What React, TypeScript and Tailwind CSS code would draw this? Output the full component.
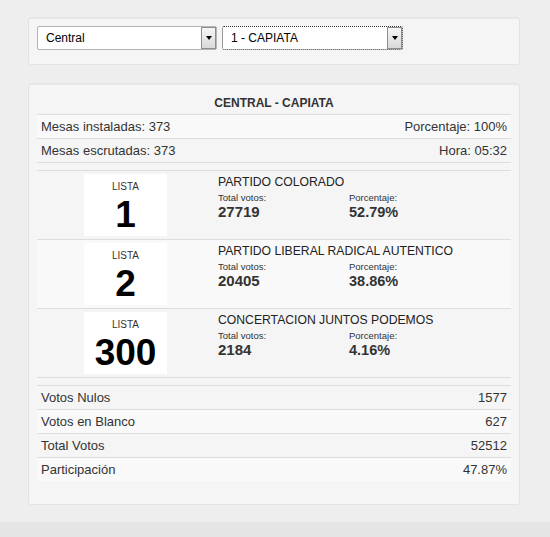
import React from "react";

const listas = [
  { lista: "1", nombre: "PARTIDO COLORADO", votos: "27719", pct: "52.79%" },
  { lista: "2", nombre: "PARTIDO LIBERAL RADICAL AUTENTICO", votos: "20405", pct: "38.86%" },
  { lista: "300", nombre: "CONCERTACION JUNTOS PODEMOS", votos: "2184", pct: "4.16%" },
];

const totales = [
  ["Votos Nulos", "1577"],
  ["Votos en Blanco", "627"],
  ["Total Votos", "52512"],
  ["Participación", "47.87%"],
];

const FakeSelect = ({ value, focused }: { value: string; focused?: boolean }) => {
  return (
    <div
      className={
        focused
          ? "relative flex h-[24px] w-[181px] items-center bg-white border border-dotted border-[#333] rounded-[2px]"
          : "relative flex h-[24px] w-[180px] items-center bg-white border border-[#b4b4b4] rounded-[2px]"
      }
    >
      <span className="pl-[8px] text-[12px] text-black">{value}</span>
      <div className="absolute right-0 top-0 bottom-0 w-[15px] flex items-center justify-center border border-[#8e8e8e] bg-gradient-to-b from-[#f6f6f6] to-[#d9d9d9]">
        <div className="w-0 h-0 border-l-[3.5px] border-r-[3.5px] border-t-[4px] border-l-transparent border-r-transparent border-t-black" />
      </div>
    </div>
  );
};

export default function App() {
  return (
    <div className="h-[537px] overflow-hidden flex flex-col bg-[#eeeeee] font-['Liberation_Sans',Arial,sans-serif] text-[#333]">
      <div className="pt-[17px] pl-[28px] w-[520px]">
        {/* filtros */}
        <div className="h-[48px] border border-[#e3e3e3] bg-[#f5f5f5] rounded-[3px] pt-[8px] pl-[8px] flex gap-[5px] shadow-[inset_0_1px_1px_rgba(0,0,0,0.05)]">
          <FakeSelect value="Central" />
          <FakeSelect value="1 - CAPIATA" focused />
        </div>

        {/* resultados */}
        <div className="mt-[18px] border border-[#e3e3e3] bg-[#f5f5f5] rounded-[3px] px-[8px] pt-[8px] pb-[23px] shadow-[inset_0_1px_1px_rgba(0,0,0,0.05)]">
          <div className="h-[22px] flex items-center justify-center text-[12px] font-bold">
            CENTRAL - CAPIATA
          </div>
          <div className="border-t border-[#dddddd] h-[24px] px-[4px] flex items-center justify-between text-[13px] bg-[#f9f9f9]">
            <span>Mesas instaladas: 373</span>
            <span>Porcentaje: 100%</span>
          </div>
          <div className="border-t border-b border-[#dddddd] h-[25px] px-[4px] flex items-center justify-between text-[13px]">
            <span>Mesas escrutadas: 373</span>
            <span>Hora: 05:32</span>
          </div>

          <div className="mt-[7px] border-t border-[#dddddd]">
            {listas.map((l, i) => (
              <div
                key={l.lista}
                className={
                  i === 1
                    ? "flex py-[3px] border-b border-[#dddddd] bg-[#f9f9f9]"
                    : "flex py-[3px] border-b border-[#dddddd]"
                }
              >
                <div className="w-[181px] shrink-0 pl-[47px]">
                  <div className="w-[83px] h-[62px] bg-white flex flex-col items-center">
                    <span className="mt-[7px] text-[10px] leading-[12px] text-[#333]">LISTA</span>
                    <span className="mt-[3px] text-[37px] leading-[38px] font-bold text-black">{l.lista}</span>
                  </div>
                </div>
                <div className="flex flex-col">
                  <span className="text-[12.2px] leading-[16px] text-[#222]">{l.nombre}</span>
                  <div className="flex mt-[2px]">
                    <div className="w-[131px] flex flex-col">
                      <span className="text-[9.5px] leading-[11px]">Total votos:</span>
                      <span className="text-[15px] leading-[18px] font-bold">{l.votos}</span>
                    </div>
                    <div className="flex flex-col">
                      <span className="text-[9.5px] leading-[11px]">Porcentaje:</span>
                      <span className="text-[14.5px] leading-[18px] font-bold">{l.pct}</span>
                    </div>
                  </div>
                </div>
              </div>
            ))}
          </div>

          <div className="mt-[7px]">
            {totales.map(([label, value], i) => (
              <div
                key={label}
                className={
                  i % 2 === 1
                    ? "border-t border-[#dddddd] h-[24px] px-[4px] flex items-center justify-between text-[13px] bg-[#f9f9f9]"
                    : "border-t border-[#dddddd] h-[24px] px-[4px] flex items-center justify-between text-[13px]"
                }
              >
                <span>{label}</span>
                <span>{value}</span>
              </div>
            ))}
          </div>
        </div>
      </div>
      <div className="mt-[17px] flex-1 bg-[#e5e5e5]" />
    </div>
  );
}
